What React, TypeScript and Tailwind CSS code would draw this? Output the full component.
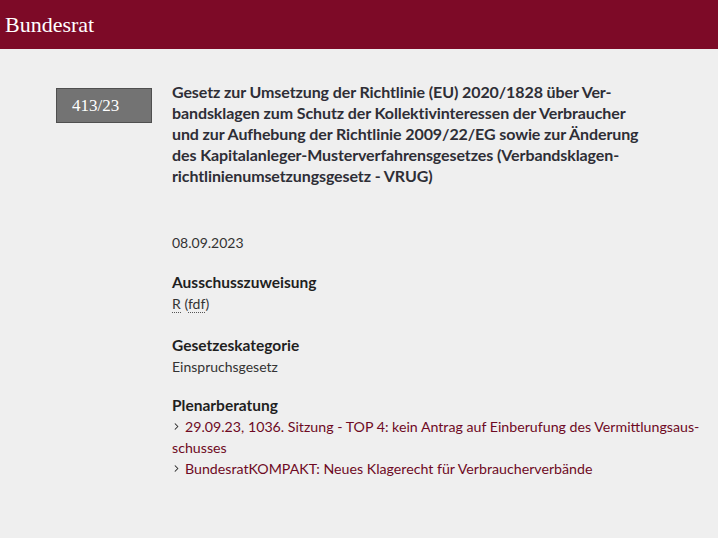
import { ChevronRight } from "lucide-react";

export default function App() {
	const sans = { fontFamily: "Lato, 'Noto Sans', sans-serif" };
	const serif = { fontFamily: "'Liberation Serif', 'DejaVu Serif', serif" };

	const titleLines = [
		"Gesetz zur Umsetzung der Richtlinie (EU) 2020/1828 über Ver-",
		"bandsklagen zum Schutz der Kollektivinteressen der Verbraucher",
		"und zur Aufhebung der Richtlinie 2009/22/EG sowie zur Änderung",
		"des Kapitalanleger-Musterverfahrensgesetzes (Verbandsklagen-",
		"richtlinienumsetzungsgesetz - VRUG)",
	];

	return (
		<div className="w-[718px] h-[538px] bg-[#efefef] overflow-hidden" style={sans}>
			{/* Header */}
			<div className="h-[49px] bg-[#7d0a27] flex items-center pl-[5px]">
				<span className="text-white text-[22px]" style={serif}>
					Bundesrat
				</span>
			</div>

			<div className="flex pt-[32px]">
				{/* Number box */}
				<div className="w-[172px] shrink-0 pl-[56px] pt-[7px]">
					<div className="w-[96px] h-[35px] bg-[#737373] border border-[#4f4f4f] flex items-center pl-[15px]">
						<span className="text-white text-[17px]" style={serif}>
							413/23
						</span>
					</div>
				</div>

				{/* Content */}
				<div className="flex-1 text-[#333333]">
					<h1 className="text-[16px] font-bold leading-[21px] text-[#2e2e36] tracking-[-0.1px]">
						{titleLines.map((line) => (
							<div key={line} className="whitespace-nowrap">
								{line}
							</div>
						))}
					</h1>

					<p className="mt-[46px] text-[14px] leading-[21px]">08.09.2023</p>

					<div className="mt-[19px]">
						<h2 className="text-[15.5px] font-bold leading-[21px] text-[#1f1f1f]">
							Ausschusszuweisung
						</h2>
						<p className="text-[14px] leading-[21px]">
							<span className="border-b border-dotted border-[#555]">R</span>{" "}
							(<span className="border-b border-dotted border-[#555]">fdf</span>)
						</p>
					</div>

					<div className="mt-[21px]">
						<h2 className="text-[15.5px] font-bold leading-[21px] text-[#1f1f1f]">
							Gesetzeskategorie
						</h2>
						<p className="text-[14px] leading-[21px]">Einspruchsgesetz</p>
					</div>

					<div className="mt-[18px]">
						<h2 className="text-[15.5px] font-bold leading-[21px] text-[#1f1f1f]">
							Plenarberatung
						</h2>
						<div className="text-[14.2px] leading-[21px] text-[#6e0a24]">
							<div className="flex items-center">
								<span className="w-[13px] shrink-0 text-[#222]">
									<ChevronRight size={11} strokeWidth={2.2} className="ml-[-1px]" />
								</span>
								<span className="whitespace-nowrap">
									29.09.23, 1036. Sitzung - TOP 4: kein Antrag auf Einberufung des Vermittlungsaus-
								</span>
							</div>
							<div>schusses</div>
							<div className="flex items-center">
								<span className="w-[13px] shrink-0 text-[#222]">
									<ChevronRight size={11} strokeWidth={2.2} className="ml-[-1px]" />
								</span>
								<span>BundesratKOMPAKT: Neues Klagerecht für Verbraucherverbände</span>
							</div>
						</div>
					</div>
				</div>
			</div>
		</div>
	);
}
